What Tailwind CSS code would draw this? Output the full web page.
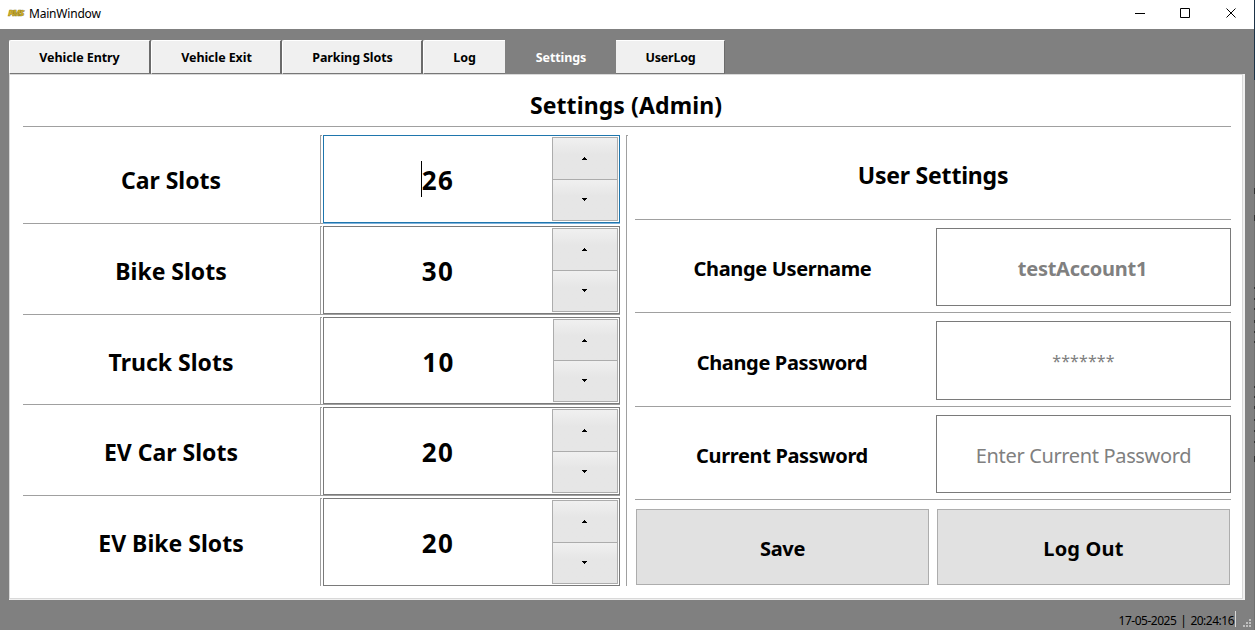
<!DOCTYPE html>
<html lang="en">
<head>
<meta charset="utf-8">
<title>MainWindow</title>
<script src="https://cdn.jsdelivr.net/npm/@tailwindcss/browser@4"></script>
</head>
<body class="relative flex h-[630px] w-[1255px] flex-col overflow-hidden bg-[#808080] font-['Noto_Sans',sans-serif] text-black">

<header class="flex h-[29px] shrink-0 items-center bg-white pl-[8px]">
  <span class="-mt-[3px] w-[21px] text-[9.5px] leading-[20px] font-black tracking-[-1.6px] text-[#dcb71f] italic [-webkit-text-stroke:0.5px_#8d7a24]">PMS</span>
  <span class="-mt-[2px] text-[12px] leading-none tracking-[-0.2px]">MainWindow</span>
  <svg class="ml-auto h-[29px] w-[150px]" viewBox="0 0 150 29" fill="none" stroke="#000"><path d="M30 13.5h10M75.500 8.500h9v9h-9zM121.500 8.500l9 9m0-9-9 9"/></svg>
</header>

<nav class="mt-[11px] ml-[9px] flex h-[35px] shrink-0 text-center text-[12.5px] leading-[33px] font-bold">
  <div class="h-[34px] w-[142px] rounded-tl-[2px] border-t border-r-2 border-b border-l border-t-white border-r-[#6b6b6b] border-b-[#777] border-l-white bg-[#f0f0f0]"><span class="tracking-[-0.08px]">Vehicle Entry</span></div>
  <div class="h-[34px] w-[131px] rounded-tl-[2px] border-t border-r-2 border-b border-l border-t-white border-r-[#6b6b6b] border-b-[#777] border-l-white bg-[#f0f0f0] pl-px"><span class="tracking-[-0.08px]">Vehicle Exit</span></div>
  <div class="h-[34px] w-[141px] rounded-tl-[2px] border-t border-r-2 border-b border-l border-t-white border-r-[#6b6b6b] border-b-[#777] border-l-white bg-[#f0f0f0] pl-px"><span class="tracking-[-0.1px]">Parking Slots</span></div>
  <div class="h-[34px] w-[82px] rounded-tl-[2px] border-t border-b border-l border-t-white border-b-[#777] border-l-white bg-[#f0f0f0]"><span>Log</span></div>
  <div class="w-[111px] pt-px pl-px text-white"><span class="tracking-[-0.1px]">Settings</span></div>
  <div class="h-[34px] w-[109px] border-t border-r border-b border-t-white border-r-[#6b6b6b] border-b-[#777] bg-[#f0f0f0] pl-px"><span class="tracking-[-0.2px]">UserLog</span></div>
</nav>

<main class="ml-[9px] flex h-[526px] w-[1236px] shrink-0 flex-col border-r-2 border-b border-[#f0f0f0] bg-white -mt-px">
 <div class="flex grow flex-col border border-[#d9d9d9] pr-[11px] pl-[13px]">
  <h1 class="h-[52px] shrink-0 border-b border-[#a0a0a0] pr-[2px] text-center text-[23px] leading-[60px] font-bold tracking-[0.1px]"><span>Settings (Admin)</span></h1>
  <div class="flex pt-2">
    <section id="slots" class="flex w-[597px] flex-col gap-[2px] text-center font-bold"></section>
    <i class="ml-[6px] h-[451px] w-px bg-[#a0a0a0]"></i><i class="h-px w-px bg-[#a0a0a0]"></i>
    <section class="ml-[7px] w-[596px] text-center text-[20px] font-bold tracking-[-0.35px]">
      <h2 class="h-[85px] border-b border-[#a0a0a0] text-[23px] leading-[80px] tracking-[-0.2px]"><span>User Settings</span></h2>
      <div class="flex h-[93px] border-b border-[#a0a0a0] pt-2">
        <div class="w-[301px] pr-[6px] leading-[82px]"><span>Change Username</span></div>
        <div class="h-[78px] w-[295px] border border-[#7a7a7a] pr-[2px] leading-[80px] tracking-[-0.25px] text-[#808080]"><span>testAccount1</span></div>
      </div>
      <div class="flex h-[94px] border-b border-[#a0a0a0] pt-2">
        <div class="w-[301px] pr-[7px] leading-[84px]"><span>Change Password</span></div>
        <div class="h-[79px] w-[295px] border border-[#7a7a7a] text-[16px] leading-[78px] font-normal tracking-[0.1px] text-[#808080]"><span>*******</span></div>
      </div>
      <div class="flex h-[93px] border-b border-[#a0a0a0] pt-2">
        <div class="w-[301px] pr-[7px] leading-[82px]"><span>Current Password</span></div>
        <div class="h-[78px] w-[295px] border border-[#7a7a7a] leading-[80px] font-normal text-[#808080]"><span>Enter Current Password</span></div>
      </div>
      <div class="flex gap-2 px-px pt-[9px]">
        <button class="h-[76px] w-[293px] border border-[#adadad] bg-[#e1e1e1] pt-[4px] tracking-[-0.3px]"><span>Save</span></button>
        <button class="h-[76px] w-[293px] border border-[#adadad] bg-[#e1e1e1] pt-[4px] tracking-[0.2px]"><span>Log Out</span></button>
      </div>
    </section>
  </div>
 </div>
</main>

<footer class="flex grow justify-end pt-[11px] text-[12px] leading-[20px] tracking-[-0.5px]">
  <div class="flex h-[16px] gap-[4px] border-r border-[#d9d9d9] pr-px"><span>17-05-2025</span><span>|</span><span>20:24:16</span></div>
  <svg class="mt-[8px] mr-[3px] ml-[7px] h-[9px] w-[9px]" viewBox="0 0 9 9" fill="#bfbfbf"><path d="M6 0h2v2H6zM3 3h2v2H3zM6 3h2v2H6zM0 6h2v2H0zM3 6h2v2H3zM6 6h2v2H6z"/></svg>
</footer>

<!-- sliver of the desktop along the window's right edge -->
<svg class="absolute top-0 right-0 h-[630px] w-px" viewBox="0 0 1 630"><path d="M0 0h1v630H0z" fill="#707070"/><path d="M0 0h1v80H0z" fill="#1d3347"/><path d="M0 188h1v6H0zM0 215h1v6H0zM0 287h1v2H0zM0 298h1v2H0zM0 308h1v2H0zM0 320h1v3H0zM0 331h1v2H0zM0 341h1v2H0zM0 386h1v2H0zM0 396h1v2H0zM0 406h1v3H0zM0 419h1v2H0zM0 430h1v2H0zM0 441h1v2H0zM0 456h1v6H0z" fill="#333"/></svg>

<template id="row">
  <div class="flex">
    <div class="w-[297px] pr-px text-[23px]"><span data-label></span></div>
    <div class="flex w-[3px]"><i class="w-px bg-[#a0a0a0]"></i><i class="h-px w-px bg-[#a0a0a0]"></i></div>
    <div data-box class="flex w-[297px] border p-px">
      <div class="relative grow pr-px text-[26px] leading-[87px] tracking-[1.5px]"><span data-value></span></div>
      <div data-steps class="grid border border-[#acacac]">
        <div class="grid place-items-center border-b border-[#acacac] bg-linear-to-b from-[#f0f0f0] to-[#e6e6e6] to-40%"><svg class="mr-[2px] h-[3px] w-[5px]" viewBox="0 0 5 3"><path d="M2 0h1v1h1v1h1v1H0V2h1V1h1z"/></svg></div>
        <div class="grid place-items-center bg-linear-to-b from-[#f0f0f0] to-[#e6e6e6] to-40%"><svg class="mr-[2px] mb-[2px] h-[3px] w-[5px]" viewBox="0 0 5 3"><path d="M0 0h5v1H4v1H3v1H2V2H1V1H0z"/></svg></div>
      </div>
    </div>
  </div>
</template>
<script>
const rows = [
  ['Car Slots', 26, 'h-[89px] border-b border-[#a0a0a0] leading-[91px]', 'border-[#1f76ad] shadow-[0_1px_0_#7fb2dc]', 'w-[66px] grid-rows-[42px_1fr]'],
  ['Bike Slots', 30, 'h-[89px] border-b border-[#a0a0a0] leading-[91px]', 'border-[#7a7a7a]', 'w-[66px] grid-rows-[42px_1fr]'],
  ['Truck Slots', 10, 'h-[88px] border-b border-[#a0a0a0] leading-[91px]', 'border-[#7a7a7a]', 'w-[65px] grid-rows-[41px_1fr]'],
  ['EV Car Slots', 20, 'h-[89px] border-b border-[#a0a0a0] leading-[91px]', 'border-[#7a7a7a]', 'w-[66px] grid-rows-[42px_1fr]'],
  ['EV Bike Slots', 20, 'h-[88px] leading-[91px]', 'border-[#7a7a7a]', 'w-[66px] grid-rows-[42px_1fr]'],
];
rows.forEach(([label, value, rowClass, boxClass, stepsClass], n) => {
  const row = document.getElementById('row').content.firstElementChild.cloneNode(true);
  row.className += ' ' + rowClass;
  row.querySelector('[data-label]').textContent = label;
  const v = row.querySelector('[data-value]');
  v.textContent = value;
  row.querySelector('[data-box]').className += ' ' + boxClass;
  row.querySelector('[data-steps]').className += ' ' + stepsClass;
  if (n === 0) v.insertAdjacentHTML('afterend', '<i class="absolute top-[24px] left-[96px] h-[36px] w-px bg-black"></i>');
  document.getElementById('slots').append(row);
});
</script>
</body>
</html>
